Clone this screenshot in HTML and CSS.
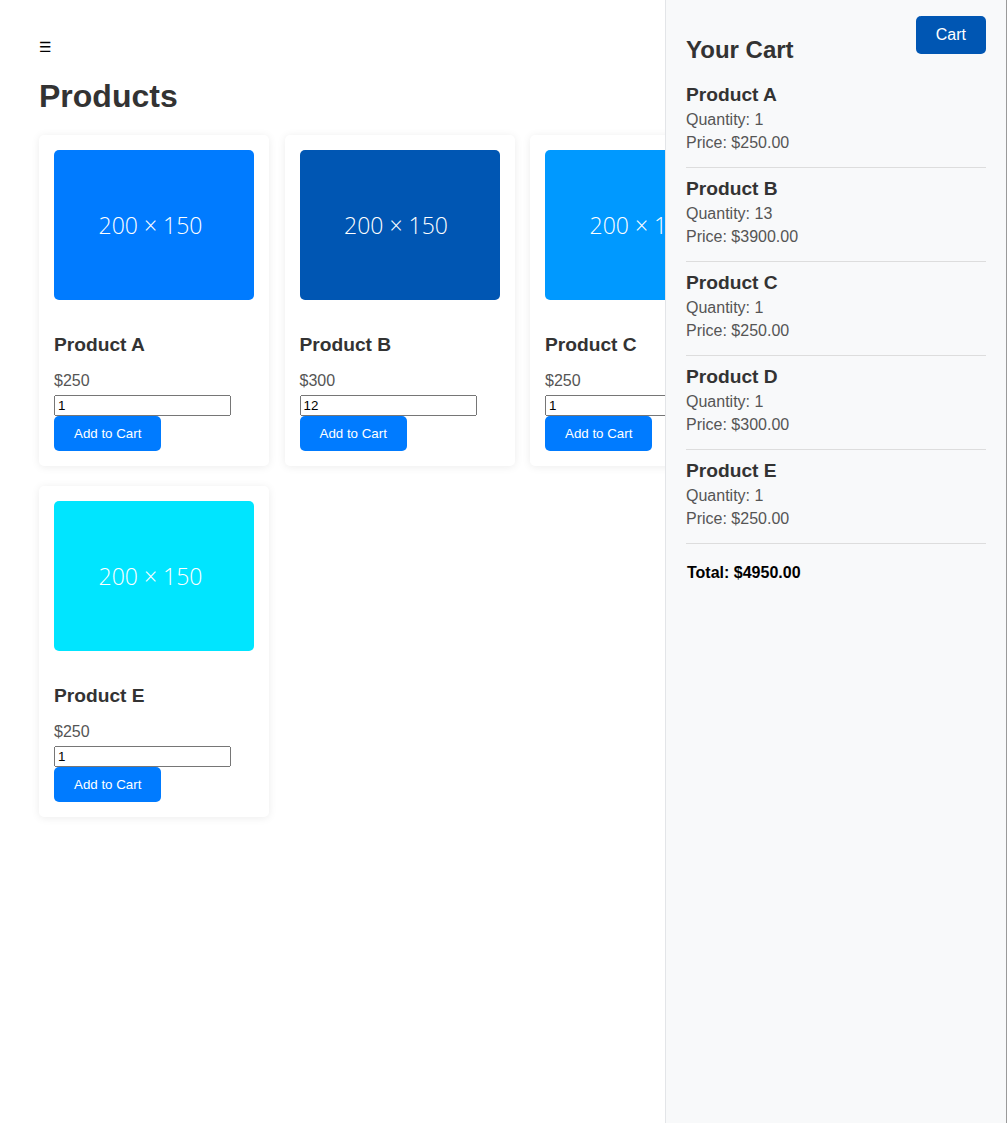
FILE: index.html
```html
<!DOCTYPE html>
<html lang="en">
<head>
<meta charset="utf-8">
<title>Products</title>
<link rel="stylesheet" href="styles.css">
</head>
<body>
<main class="main">
  <div class="menu-toggle">☰</div>
  <h1 class="page-title">Products</h1>
  <div class="product-grid">
    <div class="card">
      <div class="thumb thumb-a">200 × 150</div>
      <h3 class="card-title">Product A</h3>
      <p class="card-price">$250</p>
      <input class="qty" type="number" value="1">
      <button class="add-btn">Add to Cart</button>
    </div>
    <div class="card">
      <div class="thumb thumb-b">200 × 150</div>
      <h3 class="card-title">Product B</h3>
      <p class="card-price">$300</p>
      <input class="qty" type="number" value="12">
      <button class="add-btn">Add to Cart</button>
    </div>
    <div class="card">
      <div class="thumb thumb-c">200 × 150</div>
      <h3 class="card-title">Product C</h3>
      <p class="card-price">$250</p>
      <input class="qty" type="number" value="1">
      <button class="add-btn">Add to Cart</button>
    </div>
    <div class="card">
      <div class="thumb thumb-d">200 × 150</div>
      <h3 class="card-title">Product D</h3>
      <p class="card-price">$300</p>
      <input class="qty" type="number" value="1">
      <button class="add-btn">Add to Cart</button>
    </div>
    <div class="card">
      <div class="thumb thumb-e">200 × 150</div>
      <h3 class="card-title">Product E</h3>
      <p class="card-price">$250</p>
      <input class="qty" type="number" value="1">
      <button class="add-btn">Add to Cart</button>
    </div>
  </div>
</main>
<aside class="cart">
  <button class="cart-toggle">Cart</button>
  <h2 class="cart-title">Your Cart</h2>
  <div class="cart-item">
    <h3 class="cart-item-name">Product A</h3>
    <p class="cart-line">Quantity: 1</p>
    <p class="cart-line">Price: $250.00</p>
  </div>
  <div class="cart-item">
    <h3 class="cart-item-name">Product B</h3>
    <p class="cart-line">Quantity: 13</p>
    <p class="cart-line">Price: $3900.00</p>
  </div>
  <div class="cart-item">
    <h3 class="cart-item-name">Product C</h3>
    <p class="cart-line">Quantity: 1</p>
    <p class="cart-line">Price: $250.00</p>
  </div>
  <div class="cart-item">
    <h3 class="cart-item-name">Product D</h3>
    <p class="cart-line">Quantity: 1</p>
    <p class="cart-line">Price: $300.00</p>
  </div>
  <div class="cart-item">
    <h3 class="cart-item-name">Product E</h3>
    <p class="cart-line">Quantity: 1</p>
    <p class="cart-line">Price: $250.00</p>
  </div>
  <p class="cart-total">Total: $4950.00</p>
</aside>
</body>
</html>
```
FILE: styles.css
```css
html, body {
  margin: 0;
  padding: 0;
  background: #fff;
  font-family: "Liberation Sans", Arial, sans-serif;
  overflow: hidden;
}

.main {
  padding: 38px 0 40px 39px;
}

.menu-toggle {
  font-family: "DejaVu Sans", sans-serif;
  font-size: 14px;
  line-height: 18px;
  color: #000;
}

.page-title {
  font-size: 32px;
  font-weight: bold;
  color: #333;
  margin: 22px 0 20px;
}

.product-grid {
  display: grid;
  grid-template-columns: repeat(4, 230px);
  column-gap: 15.5px;
  row-gap: 20px;
}

.card {
  background: #fff;
  border-radius: 5px;
  box-shadow: 0 1px 8px rgba(0, 0, 0, 0.08);
  padding: 15px;
}

.thumb {
  width: 200px;
  height: 150px;
  box-sizing: border-box;
  padding-right: 7px;
  border-radius: 5px;
  display: flex;
  align-items: center;
  justify-content: center;
  color: #fff;
  font-family: "Open Sans", sans-serif;
  font-weight: 300;
  font-size: 23px;
  margin-bottom: 34px;
}

.thumb-a { background: #007bff; }
.thumb-b { background: #0056b3; }
.thumb-c { background: #0099ff; }
.thumb-d { background: #0069d9; }
.thumb-e { background: #00e5ff; }

.card-title {
  font-size: 19.2px;
  font-weight: bold;
  color: #333;
  margin: 0 0 16px;
}

.card-price {
  font-size: 16px;
  color: #555;
  margin: 0 0 5px;
}

.qty {
  display: block;
  box-sizing: border-box;
  width: 177px;
  height: 21px;
  font-family: "Liberation Sans", Arial, sans-serif;
  font-size: 13.33px;
  margin: 0;
}

.add-btn {
  display: block;
  background: #007bff;
  color: #fff;
  border: none;
  border-radius: 5px;
  padding: 10px 20px;
  font-family: "Liberation Sans", Arial, sans-serif;
  font-size: 13.33px;
}

.cart {
  position: fixed;
  top: 0;
  right: 0;
  bottom: 0;
  width: 300px;
  padding: 20px;
  background: #f8f9fa;
  border-left: 1px solid #e3e5e8;
  border-right: 1px solid #9a9a9a;
  box-sizing: content-box;
}

.cart-toggle {
  position: absolute;
  top: 16px;
  right: 20px;
  background: #0056b3;
  color: #fff;
  border: none;
  border-radius: 5px;
  padding: 10px 20px;
  font-family: "Liberation Sans", Arial, sans-serif;
  font-size: 16px;
}

.cart-title {
  font-size: 24px;
  font-weight: bold;
  color: #333;
  margin: 16px 0 20px;
}

.cart-item {
  border-bottom: 1px solid #ddd;
  padding-bottom: 10px;
  margin-bottom: 10px;
}

.cart-item-name {
  font-size: 19.2px;
  font-weight: bold;
  color: #333;
  margin: 0 0 5px;
}

.cart-line {
  font-size: 16px;
  color: #555;
  margin: 5px 0;
}

.cart-total {
  font-size: 16px;
  font-weight: bold;
  color: #000;
  margin: 20px 0 0 1px;
}
```
